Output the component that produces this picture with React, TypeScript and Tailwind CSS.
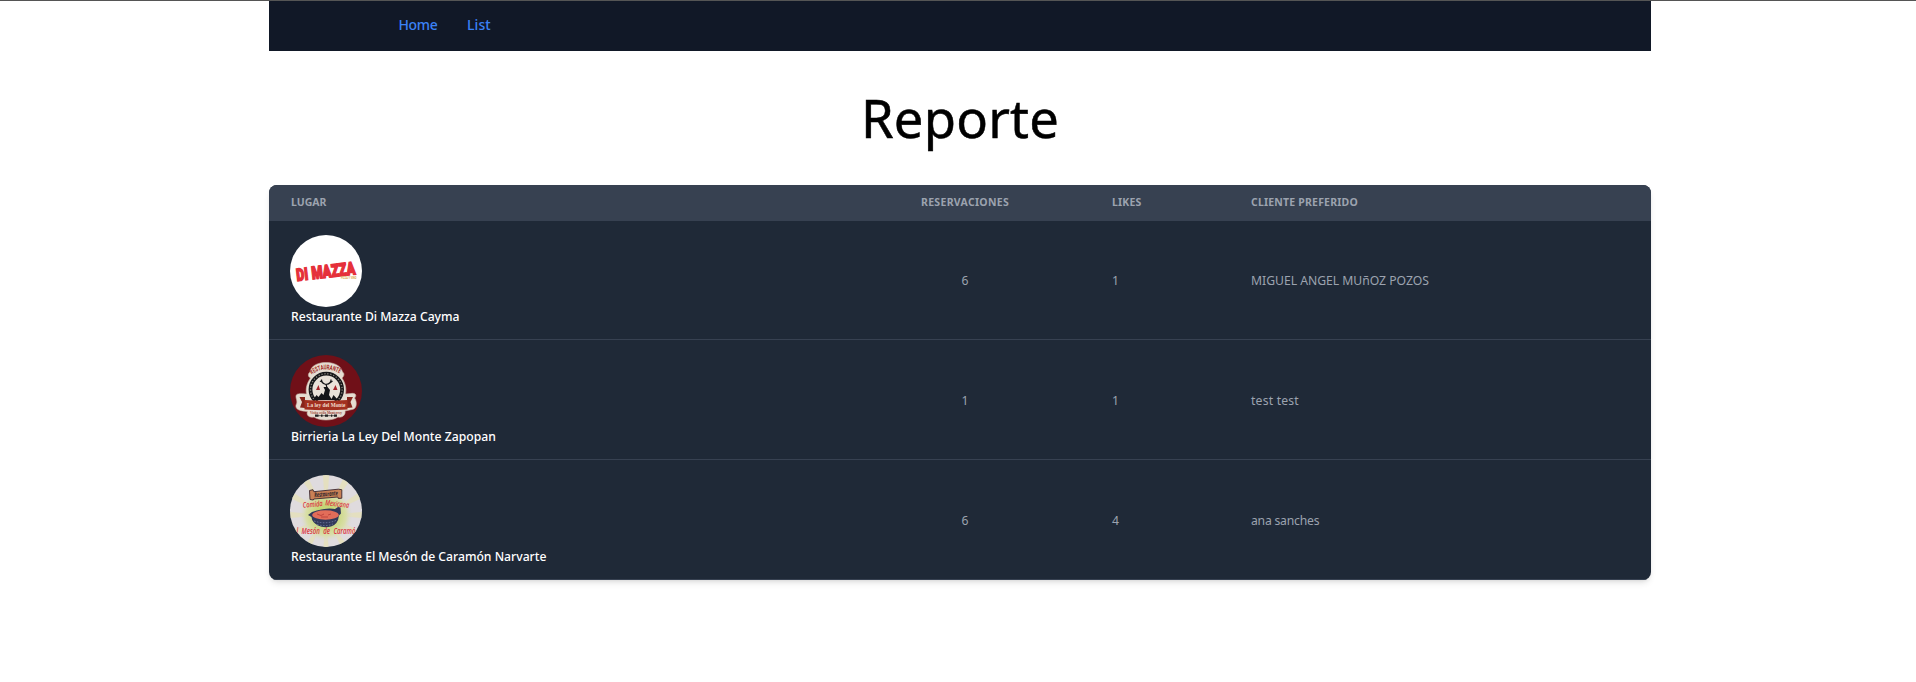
import type { ReactNode } from "react";

function DiMazzaLogo() {
  return (
    <svg viewBox="0 0 72 72" className="block size-[72px] rounded-full">
      <rect width="72" height="72" fill="#fff" />
      <g transform="translate(6.6 46) rotate(-6.5)" fill="#e5303a" stroke="#e5303a" strokeWidth="1.5" fontFamily="Roboto, sans-serif" fontWeight="900">
        <text x="0.5" y="0" fontSize="17" textLength="11.5" lengthAdjust="spacingAndGlyphs">DI</text>
        <text x="15.7" y="0" fontSize="17.5" textLength="44" lengthAdjust="spacingAndGlyphs">MAZZA</text>
      </g>
      <text x="51" y="43.8" fontSize="3.4" fontWeight="700" fill="#d9a441" fontFamily="Roboto, sans-serif" textLength="15.5" lengthAdjust="spacingAndGlyphs">PIZZA Y VINO</text>
    </svg>
  );
}

function LeyDelMonteLogo() {
  const badge =
    "M20 17 C21 10 29 7.5 36 7.5 C43 7.5 51 10 52.500 17 C54.500 18 54.500 21 52 23 C55.500 28 56.500 34 55.500 39 L61 38.500 C66 37.500 67 41 64.500 43 C67 46 67.500 54 62 54.500 L55 56 C56 60 52 63 48 62 C43 66 29 66 24 62 C19 63 16 60 17.500 56.500 C10 56 5 54.500 6 50 C8 47 6 44 6 42 C5.500 38 10 38.500 16.500 39 C15.500 33 17 28 20.500 23 C17.500 21.500 18 18.500 20 17 Z";
  return (
    <svg viewBox="0 0 72 72" className="block size-[72px] rounded-full">
      <defs>
        <path id="ley-arc" d="M21.500 19.500 Q36 9.500 51.500 19.500" />
      </defs>
      <rect width="72" height="72" fill="#701018" />
      <path d={badge} fill="#e6ddd2" stroke="#c9b8ab" strokeWidth="0.6" />
      <text fontSize="6.800" fontWeight="700" fill="#a12a20" fontFamily="Roboto, sans-serif">
        <textPath href="#ley-arc" textLength="30" lengthAdjust="spacingAndGlyphs">RESTAURANTE</textPath>
      </text>
      <circle cx="36.300" cy="34.500" r="15.800" fill="#e9e2d9" stroke="#17181a" strokeWidth="3.800" />
      <circle cx="36.300" cy="34.500" r="15.800" fill="none" stroke="#8d8881" strokeWidth="1.300" strokeDasharray="1.200 1.800" />
      <path d="M26 35 l2.500 -5 l1.500 5 z M43 35 l2.500 -5 l2 5 z" fill="#a3242a" />
      <path d="M23 45 l3.500 -5 l2 2 l3 -4 l2 2 l1.500 -5 l-1.500 -3 l4 0 l2.500 3 l-1 5 l2.500 4 l2 -4 l4.500 5 z" fill="#141518" />
      <path d="M31.500 24.500 q0 4 4.500 5 q5.500 -1 5 -5 M32 27 l-2 -1 M40.500 27.500 l2 -1.500 M36 29 l1 4" fill="none" stroke="#141518" strokeWidth="1.200" />
      <path d="M9.500 42 L15 42 L15 53 L10 52.500 L12 47 Z M63 42 L57 42 L57 53 L62.500 52.500 L60.500 47 Z" fill="#87251b" />
      <path d="M14.500 45 Q36 46.500 57.500 45 V54.500 Q36 56 14.500 54.500 Z" fill="#a2301f" />
      <text x="17" y="52.200" fontSize="6.200" fontWeight="700" fill="#f1ddcd" fontFamily="'Liberation Serif', serif" textLength="38.500" lengthAdjust="spacingAndGlyphs">La ley del Monte</text>
      <text x="20" y="58.500" fontSize="3.200" fontWeight="700" fill="#9b4236" fontFamily="'Liberation Serif', serif" textLength="32" lengthAdjust="spacingAndGlyphs">Visita estilo Monterrey</text>
      <path d="M26 60.700 H46" stroke="#222" strokeWidth="0.700" />
      <path d="M25 60.700 h3.500 M31 60.700 h1.500 M35 60.700 h3 M41 60.700 h1.200 M44 60.700 h3" stroke="#222" strokeWidth="2.300" />
    </svg>
  );
}

const RAY_ANGLES = [0, 30, 60, 90, 120, 150, 180, 210, 240, 270, 300, 330];

function MesonLogo() {
  const script = "'Open Sans', sans-serif";
  return (
    <svg viewBox="0 0 72 72" className="block size-[72px] rounded-full">
      <defs>
        <radialGradient id="meson-glow">
          <stop offset="0.350" stopColor="#c5d676" />
          <stop offset="0.750" stopColor="#d9dea9" />
          <stop offset="1" stopColor="#dcd9dc" stopOpacity="0" />
        </radialGradient>
      </defs>
      <rect width="72" height="72" fill="#dfdbde" />
      {RAY_ANGLES.map((angle) => (
        <path key={angle} d="M36 40 L32 -10 L40 -10 Z" fill="#e5e1b4" opacity="0.700" transform={`rotate(${angle} 36 40)`} />
      ))}
      <circle cx="36" cy="40" r="27" fill="url(#meson-glow)" />
      <path d="M19.500 15.500 l3.500 -0.800 l0.800 2 l24.500 -2.500 l3.500 0.500 l0 8.500 l-3.500 0.300 l-0.500 -1.500 l-24 2 l-0.500 1 l-3.300 -0.500 z" fill="#c98156" stroke="#3b2730" strokeWidth="0.900" />
      <text transform="translate(24.500 22.300) rotate(-5)" fontSize="6.500" fontWeight="700" fontStyle="italic" fill="#2b1e28" fontFamily={script} textLength="23.500" lengthAdjust="spacingAndGlyphs">Restaurante</text>
      <g fill="#dc3442" fontWeight="600" fontStyle="italic" fontFamily={script}>
        <text transform="translate(13 32.800) rotate(-5)" fontSize="7.800" textLength="20" lengthAdjust="spacingAndGlyphs">Comida</text>
        <text transform="translate(35 30.300) rotate(6)" fontSize="7.800" textLength="24" lengthAdjust="spacingAndGlyphs">Mexicana</text>
      </g>
      <path d="M18 40 l4 -3 q14 -5 23 -3 l3 -2 l2.500 0.500 l0.500 6 l-2 2 q-1 9 -8 11 q-7 2 -13 -1 q-6 -3 -6.500 -8.500 z" fill="#32395a" />
      <path d="M24 46 q12 4 23 -1 M27 49.500 q9 2.500 16 -0.500" fill="none" stroke="#7580a5" strokeWidth="0.900" strokeDasharray="1.500 1.500" />
      <ellipse cx="35.500" cy="40" rx="13.300" ry="4.700" fill="#e26d59" />
      <path d="M27 39 l4 1.500 l3 -1.500 M38 40 l3 -1 M31 42 h7" fill="none" stroke="#b93f3a" strokeWidth="0.900" />
      <text x="6.500" y="58.800" fill="#dc3442" fontSize="8.400" fontWeight="600" fontStyle="italic" fontFamily={script} wordSpacing="2.500" textLength="59" lengthAdjust="spacingAndGlyphs">l Mesón de Caramó</text>
    </svg>
  );
}

type Row = {
  name: string;
  nameClass: string;
  logo: ReactNode;
  bookings: number;
  likes: number;
  client: string;
  clientClass: string;
};

const rows: Row[] = [
  {
    name: "Restaurante Di Mazza Cayma",
    nameClass: "tracking-[-0.03px]",
    logo: <DiMazzaLogo />,
    bookings: 6,
    likes: 1,
    client: "MIGUEL ANGEL MUñOZ POZOS",
    clientClass: "tracking-[-0.02px]",
  },
  {
    name: "Birrieria La Ley Del Monte Zapopan",
    nameClass: "tracking-[0.01px]",
    logo: <LeyDelMonteLogo />,
    bookings: 1,
    likes: 1,
    client: "test test",
    clientClass: "tracking-[0.19px]",
  },
  {
    name: "Restaurante El Mesón de Caramón Narvarte",
    nameClass: "tracking-[-0.01px]",
    logo: <MesonLogo />,
    bookings: 6,
    likes: 4,
    client: "ana sanches",
    clientClass: "tracking-[-0.22px]",
  },
];

export default function App() {
  return (
    <div className="min-h-[682px] border-t border-[#555555] bg-white font-['Noto_Sans','Open_Sans',sans-serif] text-black">
      <div className="ml-[269px] w-[1382px]">
        <nav className="flex h-[50px] items-center gap-[29.5px] bg-[#111827] pb-1 pl-[129.5px] text-[14px] font-medium text-[#3b82f6]">
          <a href="#" className="tracking-[-0.35px]">Home</a>
          <a href="#" className="tracking-[0.1px]">List</a>
        </nav>

        <h1 className="mt-10 h-[54px] text-center text-[52.5px] leading-[54px] tracking-[0.2px] [-webkit-text-stroke:0.5px_black]">Reporte</h1>

        <div className="mt-10 overflow-hidden rounded-lg bg-[#1f2937] shadow-md">
          <table className="w-full table-fixed border-separate border-spacing-0 text-left text-[12.2px] leading-[18px] text-[#9ca3af]">
            <colgroup>
              <col className="w-[630px]" />
              <col className="w-[191px]" />
              <col className="w-[139px]" />
              <col className="w-[422px]" />
            </colgroup>
            <thead className="bg-[#374151] text-[10.5px] leading-[14px] font-bold">
              <tr className="h-9">
                <th className="px-[22px] pb-[3px]">LUGAR</th>
                <th className="px-[22px] pb-[3px] tracking-[0.3px]">RESERVACIONES</th>
                <th className="px-[22px] pb-[3px] tracking-[0.18px]">LIKES</th>
                <th className="px-[22px] pb-[3px] tracking-[0.19px]">CLIENTE PREFERIDO</th>
              </tr>
            </thead>
            <tbody className="[&_td]:border-b [&_td]:border-[#374151] [&_th]:border-b [&_th]:border-[#374151]">
              {rows.map((row) => (
                <tr key={row.name} className="h-[120px] first:h-[119px]">
                  <th className="px-[22px] pb-[13px] align-bottom font-medium whitespace-nowrap text-white">
                    <div className="-ml-px">{row.logo}</div>
                    <div className={`mt-px ${row.nameClass}`}>{row.name}</div>
                  </th>
                  <td className="px-[22px] pt-0.5">
                    <div className="w-[88px] text-center">{row.bookings}</div>
                  </td>
                  <td className="px-[22px] pt-0.5">{row.likes}</td>
                  <td className={`px-[22px] pt-0.5 whitespace-nowrap ${row.clientClass}`}>{row.client}</td>
                </tr>
              ))}
            </tbody>
          </table>
        </div>
      </div>
    </div>
  );
}
